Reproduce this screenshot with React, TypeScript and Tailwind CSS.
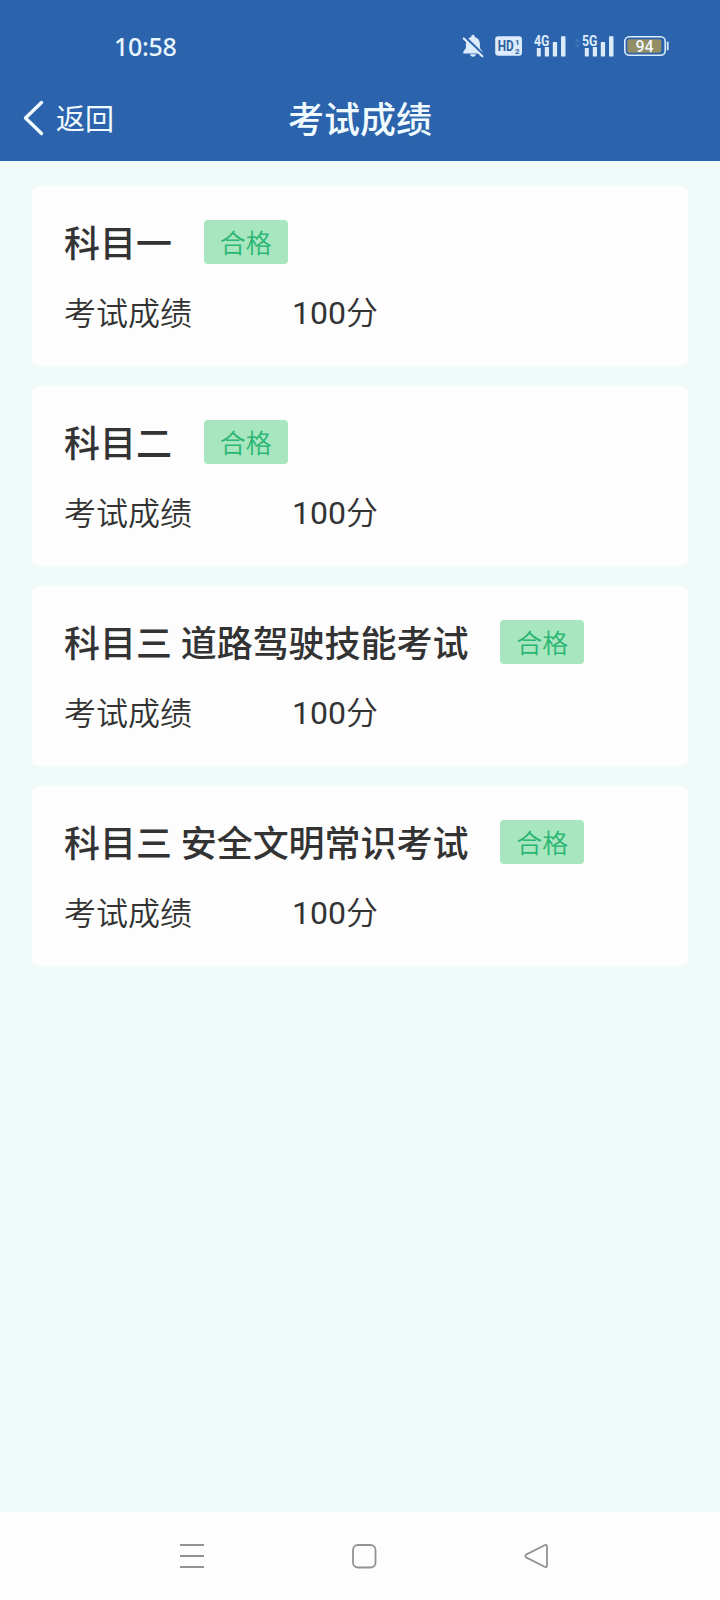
import type { ReactNode } from "react";

interface ExamResult {
  title: string;
  score: number;
  status: string;
}

const results: ExamResult[] = [
  { title: "科目一", score: 100, status: "合格" },
  { title: "科目二", score: 100, status: "合格" },
  { title: "科目三 道路驾驶技能考试", score: 100, status: "合格" },
  { title: "科目三 安全文明常识考试", score: 100, status: "合格" },
];

function MutedBellIcon() {
  return (
    <svg width="22" height="24" viewBox="0 0 22 24" className="text-[#dcebfb]">
      <path
        d="M11 0.800c1 0 1.700.7 1.700 1.700v.5c3.400.9 5.200 3.500 5.200 6.700v4.300l2.600 3.800v1.700H1.300v-1.700l2.600-3.800V9.700c0-3.200 1.900-5.800 5.300-6.700v-.5c0-1 .8-1.700 1.800-1.700z"
        fill="currentColor"
      />
      <path d="M8 20.300h6c-.3 1.600-1.500 2.500-3 2.500s-2.700-.9-3-2.500z" fill="currentColor" />
      <path d="M2.600 2.800 21.500 21" stroke="#2b64ac" strokeWidth="2.600" />
      <path d="M1.800 4.500 20.300 22.200" stroke="currentColor" strokeWidth="2.200" strokeLinecap="round" />
    </svg>
  );
}

function HdIcon() {
  return (
    <svg width="28" height="20" viewBox="0 0 28 20" className="font-['Roboto',sans-serif] font-bold">
      <rect x="0.200" y="0.200" width="26.800" height="19.600" rx="3" fill="#dcebfb" />
      <text x="2.800" y="14.800" fontSize="14.500" fill="#2f5f9f" textLength="16" lengthAdjust="spacingAndGlyphs">
        HD
      </text>
      <text x="20" y="8.800" fontSize="8" fill="#2f5f9f">1</text>
      <text x="20" y="18" fontSize="8" fill="#2f5f9f">2</text>
    </svg>
  );
}

function SignalIcon({ label, arrows = false }: { label: string; arrows?: boolean }) {
  return (
    <svg width="40" height="24" viewBox="0 0 40 24" className="font-['Roboto',sans-serif] font-bold">
      {arrows && (
        <g fill="#3f75ba">
          <path d="M0.500 8 3.500 4.500 6.500 8z" />
          <path d="M0.500 10.500h6L3.500 14z" />
        </g>
      )}
      <text x="8" y="11.600" fontSize="14" fill="#dcebfb" textLength="15.500" lengthAdjust="spacingAndGlyphs">
        {label}
      </text>
      <g fill="#dcebfb">
        <rect x="10.800" y="14" width="4" height="8.500" rx="0.500" />
        <rect x="18.800" y="13" width="4.200" height="9.500" rx="0.500" />
        <rect x="26.800" y="8" width="4.300" height="14.500" rx="0.500" />
        <rect x="35" y="2.300" width="4.500" height="20.200" rx="0.500" />
      </g>
    </svg>
  );
}

function BatteryIcon({ level }: { level: number }) {
  return (
    <svg width="46" height="20" viewBox="0 0 46 20" className="font-['Roboto',sans-serif] font-medium">
      <rect x="0.800" y="0.800" width="40.400" height="18.400" rx="4.500" fill="none" stroke="#dcebfb" strokeWidth="1.600" />
      <rect x="3.300" y="3.300" width="34" height="13.400" rx="2" fill="#928f65" />
      <path d="M43.700 6.500v7" stroke="#dcebfb" strokeWidth="1.800" strokeLinecap="round" />
      <text x="20.500" y="15.900" fontSize="16" fill="#f3f8ff" textAnchor="middle">
        {level}
      </text>
    </svg>
  );
}

function StatusBar() {
  return (
    <div className="flex h-[76px] items-start pl-[114px] pr-[50px]">
      <span className="mt-[30px] font-['Noto_Sans','Roboto',sans-serif] text-[25px] leading-[32px] font-medium tracking-[-0.3px] text-[#eaf6ff]">
        10:58
      </span>
      <div className="mt-[34px] ml-auto flex h-6 items-center">
        <MutedBellIcon />
        <div className="ml-[11px]">
          <HdIcon />
        </div>
        <div className="ml-[3px]">
          <SignalIcon label="4G" />
        </div>
        <div className="ml-[8px]">
          <SignalIcon label="5G" arrows />
        </div>
        <div className="ml-[10px]">
          <BatteryIcon level={94} />
        </div>
      </div>
    </div>
  );
}

function NavBar() {
  return (
    <div className="grid h-[85px] grid-cols-3 items-center text-[#f0faff]">
      <button className="flex items-center pl-[23px] text-[29px] leading-[40px]">
        <svg width="21" height="36" viewBox="0 0 21 36" fill="none" className="mb-[2px]">
          <path d="M18.500 2.500 2.500 18 18.500 33.500" stroke="currentColor" strokeWidth="3.400" strokeLinecap="round" strokeLinejoin="round" />
        </svg>
        <span className="ml-[12px] pt-[2px]">返回</span>
      </button>
      <h1 className="pt-[4px] text-center text-[36px] leading-[48px] font-medium">考试成绩</h1>
    </div>
  );
}

function ResultCard({ result }: { result: ExamResult }) {
  return (
    <div className="h-[180px] rounded-md bg-[#fdfdfd] px-8 pt-[34px]">
      <div className="flex h-[44px] items-center">
        <h2 className="pt-[6px] text-[36px] leading-[44px] font-medium tracking-[-0.05px] whitespace-nowrap">{result.title}</h2>
        <span className="ml-8 flex h-[44px] w-[84px] items-center justify-center rounded bg-[#a8e6c0] pt-[4px] text-[26px] leading-[40px] font-[350] text-[#2bb673]">
          {result.status}
        </span>
      </div>
      <div className="mt-[28px] flex text-[32px] leading-[44px]">
        <span className="w-[228px] font-[350]">考试成绩</span>
        <span className="-mt-px">
          {result.score}
          <span className="font-[350]">分</span>
        </span>
      </div>
    </div>
  );
}

function NavKey({ children }: { children: ReactNode }) {
  return (
    <svg width="28" height="28" viewBox="0 0 28 28" fill="none" stroke="#929292" strokeWidth="1.800">
      {children}
    </svg>
  );
}

export default function App() {
  return (
    <div className="flex h-[1600px] w-[720px] flex-col overflow-hidden bg-[#f0faf9] font-['Roboto','Noto_Sans_CJK_SC',sans-serif] text-[#333333]">
      <header className="h-[161px] bg-[#2b64ac]">
        <StatusBar />
        <NavBar />
      </header>

      <main className="flex flex-1 flex-col gap-5 px-8 pt-[25px]">
        {results.map((result) => (
          <ResultCard key={result.title} result={result} />
        ))}
      </main>

      <footer className="flex h-[88px] items-center justify-between bg-[#fdfdfd] pr-[170px] pl-[178px]">
        <NavKey>
          <path d="M2 3h24M2 14h24M2 25h24" />
        </NavKey>
        <NavKey>
          <rect x="3" y="3" width="22.500" height="22.500" rx="5" />
        </NavKey>
        <NavKey>
          <path d="M4.500 12.400 22.600 3.200c1.300-.6 2.400 0 2.400 1.400v18.800c0 1.400-1.100 2-2.400 1.400L4.500 15.600c-1.500-.8-1.500-2.400 0-3.200z" />
        </NavKey>
      </footer>
    </div>
  );
}
